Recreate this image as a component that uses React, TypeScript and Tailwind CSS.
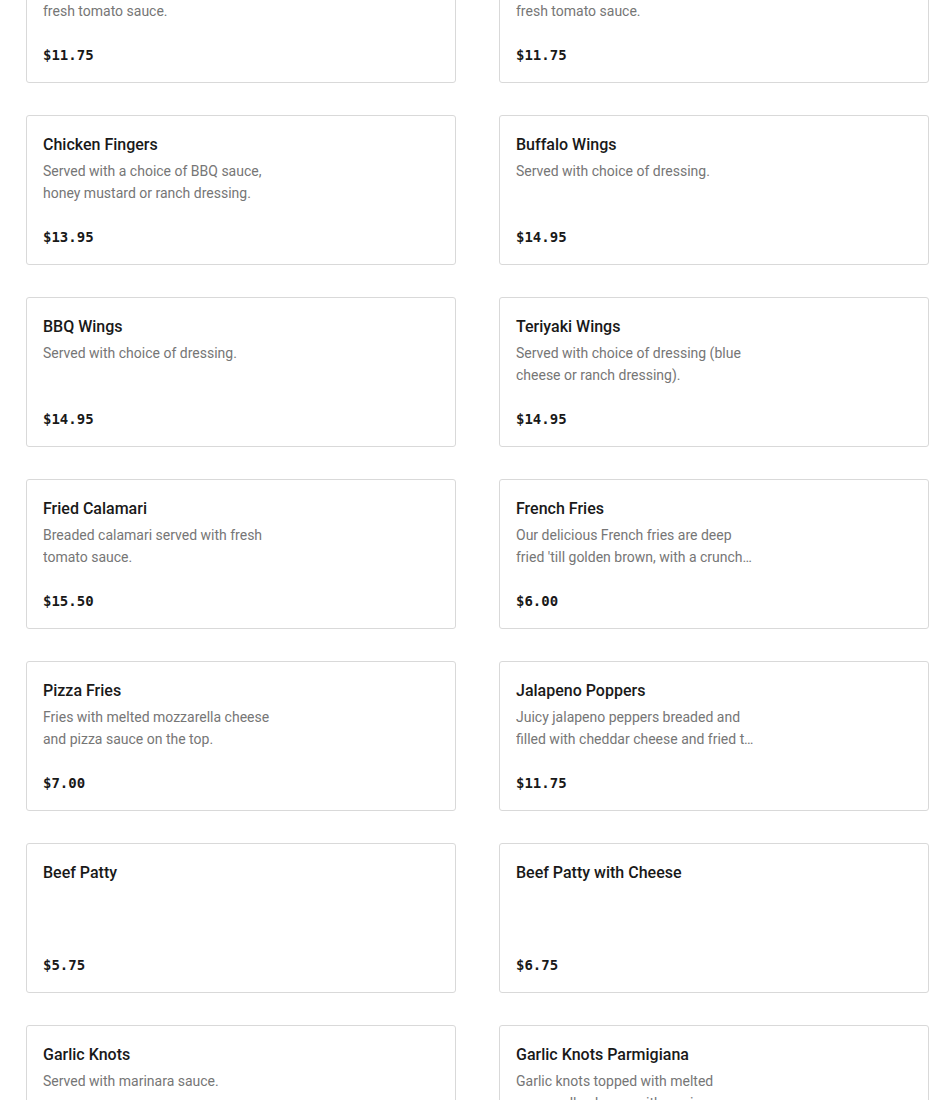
import React from "react";

type Item = { name: string; desc?: string; price: string };

const items: Item[] = [
  { name: "Mozzarella Sticks", desc: "Crispy mozzarella sticks served with fresh tomato sauce.", price: "$11.75" },
  { name: "Eggplant Sticks", desc: "Lightly breaded eggplant served with fresh tomato sauce.", price: "$11.75" },
  { name: "Chicken Fingers", desc: "Served with a choice of BBQ sauce, honey mustard or ranch dressing.", price: "$13.95" },
  { name: "Buffalo Wings", desc: "Served with choice of dressing.", price: "$14.95" },
  { name: "BBQ Wings", desc: "Served with choice of dressing.", price: "$14.95" },
  { name: "Teriyaki Wings", desc: "Served with choice of dressing (blue cheese or ranch dressing).", price: "$14.95" },
  { name: "Fried Calamari", desc: "Breaded calamari served with fresh tomato sauce.", price: "$15.50" },
  { name: "French Fries", desc: "Our delicious French fries are deep fried 'till golden brown, with a crunchy outside and a soft inside.", price: "$6.00" },
  { name: "Pizza Fries", desc: "Fries with melted mozzarella cheese and pizza sauce on the top.", price: "$7.00" },
  { name: "Jalapeno Poppers", desc: "Juicy jalapeno peppers breaded and filled with cheddar cheese and fried to perfection.", price: "$11.75" },
  { name: "Beef Patty", price: "$5.75" },
  { name: "Beef Patty with Cheese", price: "$6.75" },
  { name: "Garlic Knots", desc: "Served with marinara sauce.", price: "$5.95" },
  { name: "Garlic Knots Parmigiana", desc: "Garlic knots topped with melted mozzarella cheese with marinara sauce on the side.", price: "$8.95" },
];

function Card({ item }: { item: Item }) {
  return (
    <div className="h-[150px] border border-[#d9d9d9] rounded-[3px] bg-white px-4 pt-[17px] pb-4 flex flex-col">
      <div className="text-[16px] leading-6 font-medium text-[#191919]">{item.name}</div>
      {item.desc ? (
        <div className="mt-[3px] max-w-[240px] text-[14px] leading-[22px] text-[#767676] line-clamp-2">{item.desc}</div>
      ) : null}
      <div className="mt-auto text-[14px] leading-[22px] font-bold text-[#191919] [font-family:'DejaVu_Sans_Mono',monospace]">
        {item.price}
      </div>
    </div>
  );
}

export default function App() {
  return (
    <div className="bg-white min-h-screen overflow-hidden [font-family:Roboto,'Noto_Sans',sans-serif]">
      <div className="mt-[-67px] pl-[26px] pr-[21px] grid grid-cols-2 gap-x-[43px] gap-y-8">
        {items.map((it) => (
          <Card key={it.name} item={it} />
        ))}
      </div>
    </div>
  );
}
